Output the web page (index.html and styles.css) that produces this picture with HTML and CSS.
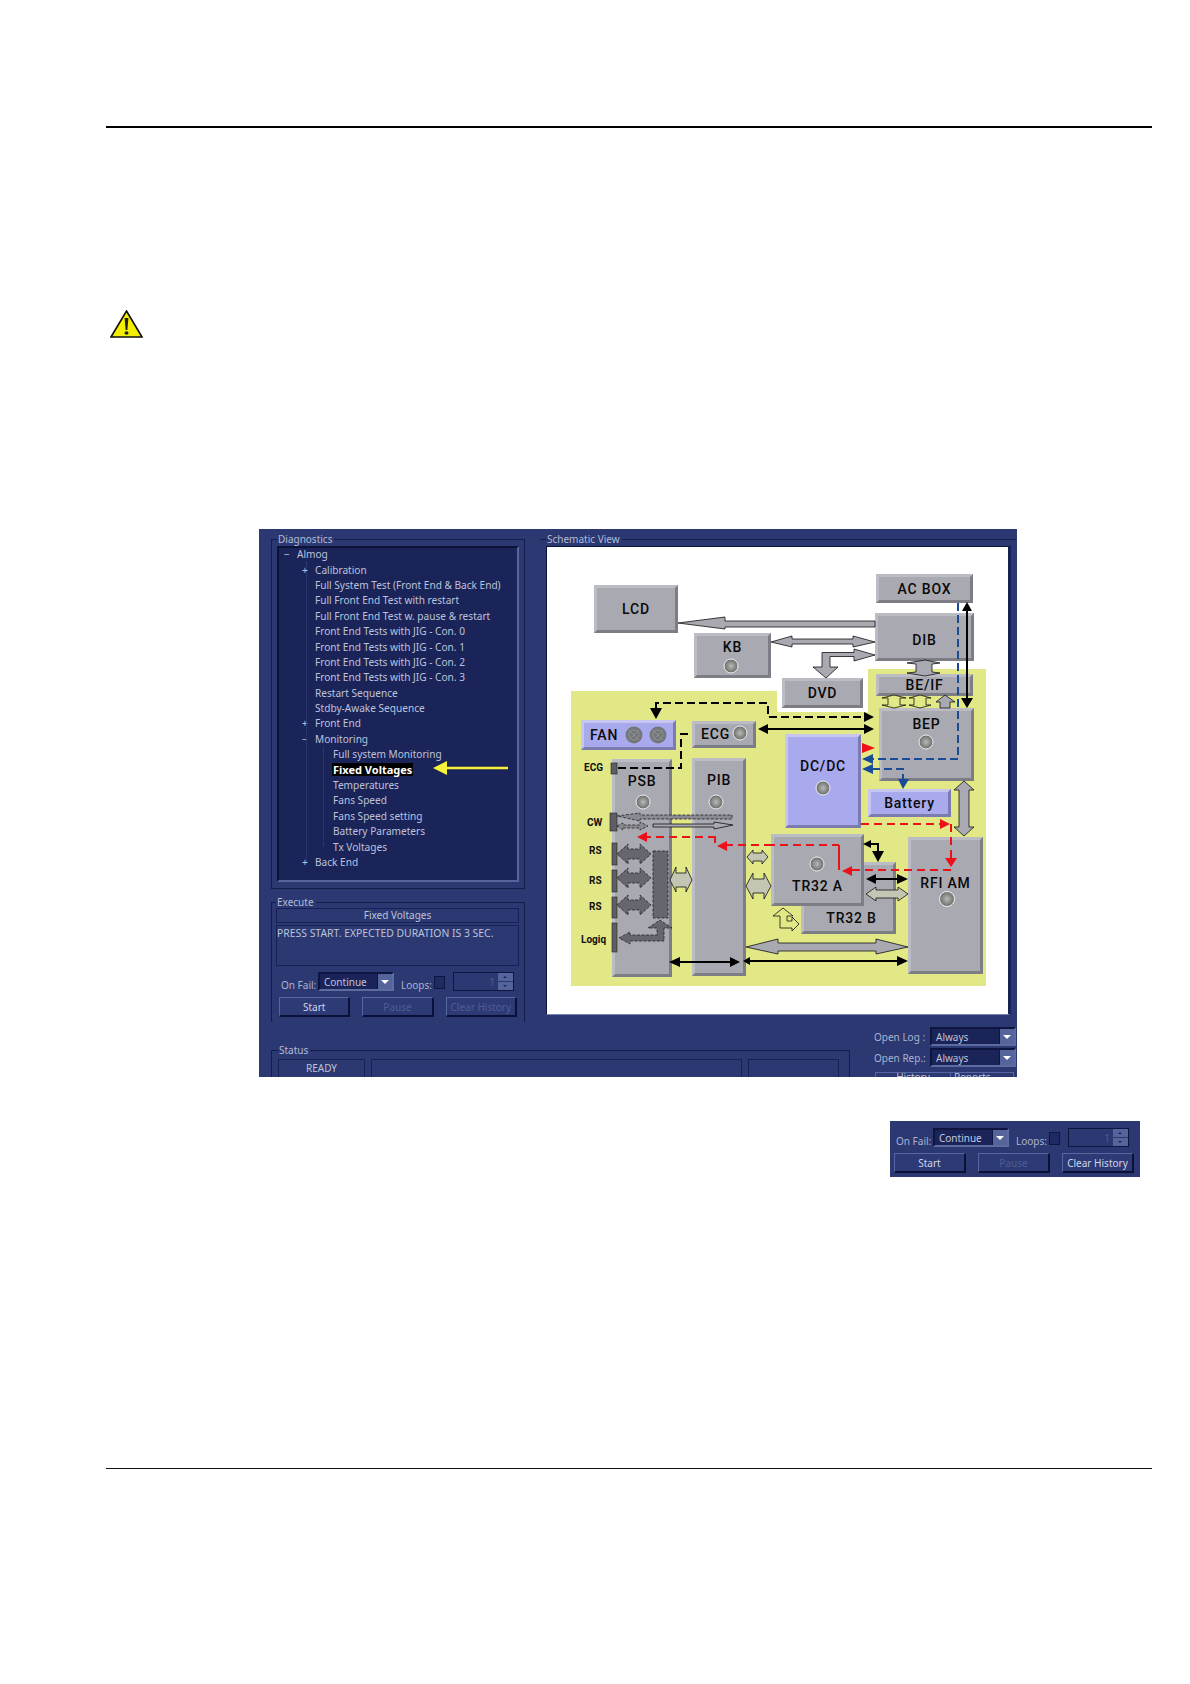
FILE: index.html
```html
<!DOCTYPE html>
<html lang="en">
<head>
    <meta charset="UTF-8">
    <title>Diagnostics - Fixed Voltages</title>
    <link rel="stylesheet" href="styles.css">
</head>
<body>
<div class="page">
    <div class="top-rule"></div>

    <svg class="warning-icon" width="33" height="28" viewBox="0 0 33 28">
        <polygon points="16.5,1 32,27 1,27" fill="#f4ee00" stroke="#111" stroke-width="1.6" stroke-linejoin="miter"/>
        <path d="M14.6 8 L18.4 8 L17.4 20 L15.6 20 Z" fill="#222"/>
        <ellipse cx="16.5" cy="23" rx="2" ry="1.8" fill="#222"/>
    </svg>

    <div class="shot">
        <div class="shot-top">
            <div class="left-col">
                <fieldset class="group group-diag">
                    <legend>Diagnostics</legend>
                    <div class="tree">
                        <div class="row row-root"><span class="toggle">&minus;</span>Almog</div>
                        <ul class="tree-l2">
                            <li class="row row-l2"><span class="toggle">+</span>Calibration</li>
                            <li class="row row-l2"><span class="toggle"></span>Full System Test (Front End &amp; Back End)</li>
                            <li class="row row-l2"><span class="toggle"></span>Full Front End Test with restart</li>
                            <li class="row row-l2"><span class="toggle"></span>Full Front End Test w. pause &amp; restart</li>
                            <li class="row row-l2"><span class="toggle"></span>Front End Tests with JIG - Con. 0</li>
                            <li class="row row-l2"><span class="toggle"></span>Front End Tests with JIG - Con. 1</li>
                            <li class="row row-l2"><span class="toggle"></span>Front End Tests with JIG - Con. 2</li>
                            <li class="row row-l2"><span class="toggle"></span>Front End Tests with JIG - Con. 3</li>
                            <li class="row row-l2"><span class="toggle"></span>Restart Sequence</li>
                            <li class="row row-l2"><span class="toggle"></span>Stdby-Awake Sequence</li>
                            <li class="row row-l2"><span class="toggle">+</span>Front End</li>
                            <li class="row row-l2"><span class="toggle">&minus;</span>Monitoring</li>
                            <li>
                                <ul class="tree-l3">
                                    <li class="row row-l3">Full system Monitoring</li>
                                    <li class="row row-l3"><span class="selected">Fixed Voltages</span></li>
                                    <li class="row row-l3">Temperatures</li>
                                    <li class="row row-l3">Fans Speed</li>
                                    <li class="row row-l3">Fans Speed setting</li>
                                    <li class="row row-l3">Battery Parameters</li>
                                    <li class="row row-l3">Tx Voltages</li>
                                </ul>
                            </li>
                            <li class="row row-l2"><span class="toggle">+</span>Back End</li>
                        </ul>
                        <svg class="tree-arrow" width="76" height="16" viewBox="0 0 76 16">
                            <polygon points="0,8 14,1 14,6.8 75,6.8 75,9.2 14,9.2 14,15" fill="#f6f23a"/>
                        </svg>
                    </div>
                </fieldset>

                <fieldset class="group group-exec">
                    <legend>Execute</legend>
                    <div class="exec-title">Fixed Voltages</div>
                    <div class="exec-text">PRESS START. EXPECTED DURATION IS 3 SEC.</div>
                    <div class="run-panel">
                        <div class="run-row">
                            <span class="run-label">On Fail:</span>
                            <div class="select select-run"><span>Continue</span><span class="select-btn"></span></div>
                            <span class="loops-label">Loops:</span>
                            <span class="checkbox"></span>
                            <div class="spin"><span>1</span><span class="spin-btns"><i></i><i></i></span></div>
                        </div>
                        <div class="run-buttons">
                            <div class="btn">Start</div>
                            <div class="btn btn-off">Pause</div>
                            <div class="btn btn-off">Clear History</div>
                        </div>
                    </div>
                </fieldset>
            </div>

            <fieldset class="group group-schem">
                <legend>Schematic View</legend>
                <div class="schematic">
                    <div class="yellow-area"></div>

                    <div class="node node-lcd">LCD</div>
                    <div class="node node-ac">AC BOX</div>
                    <div class="node node-dib">DIB</div>
                    <div class="node node-kb">KB</div>
                    <div class="node node-dvd">DVD</div>
                    <div class="node node-beif">BE/IF</div>
                    <div class="node node-bep">BEP</div>
                    <div class="node node-ecg">ECG</div>
                    <div class="node node-psb">PSB</div>
                    <div class="node node-pib">PIB</div>
                    <div class="node node-blue node-fan">FAN</div>
                    <div class="node node-blue node-dc">DC/DC</div>
                    <div class="node node-blue node-batt">Battery</div>
                    <div class="node node-trb">TR32 B</div>
                    <div class="node node-tra">TR32 A</div>
                    <div class="node node-rfi">RFI AM</div>

                    <span class="conn-label label-ecg">ECG</span>
                    <span class="conn-label label-cw">CW</span>
                    <span class="conn-label label-rs1">RS</span>
                    <span class="conn-label label-rs2">RS</span>
                    <span class="conn-label label-rs3">RS</span>
                    <span class="conn-label label-logiq">Logiq</span>

                    <!-- coordinates are page pixels, so the viewBox starts at the panel corner -->
                    <svg class="wires" width="461" height="467" viewBox="547 547 461 467">
                        <defs>
                            <radialGradient id="led" cx="50%" cy="50%" r="55%">
                                <stop offset="0" stop-color="#b8bab8"/>
                                <stop offset="1" stop-color="#5f625f"/>
                            </radialGradient>
                        </defs>

                        <!-- grey buses -->
                        <g class="bus">
                            <polygon points="678,623 725,617 725,621 875,621 875,627 725,627 725,629"/>
                            <polygon points="771,642 792,636 792,639 853,639 853,636 875,642 853,647 853,644 792,644 792,647"/>
                            <polygon points="875,655 854,649 854,652.5 822,652.5 822,667 813,667 826,678 838,667 830,667 830,656.5 854,656.5 854,661"/>
                            <polygon points="925,660 940,663 932,664 932,672 940,673 925,676 907,673 916,672 916,664 907,663"/>
                            <polygon points="945,695 955,702 950,702 950,708 940,708 940,702 936,702"/>
                            <polygon points="964,781 974,790 969,790 969,827 974,827 964,836 954,827 959,827 959,790 954,790"/>
                            <polygon points="746,947 778,939 778,943 876,943 876,939 908,947 876,954 876,951 778,951 778,954"/>
                        </g>
                        <g class="bus-hollow">
                            <polygon points="894,695 906,698 900,698 900,705 906,705 894,708 882,705 888,705 888,698 882,698"/>
                            <polygon points="920,695 931,698 926,698 926,705 931,705 920,708 909,705 914,705 914,698 909,698"/>
                            <polygon points="783,908 793,916 787,916 787,921 792,921 792,917 799,924 792,931 792,928 780,928 780,916 773,916"/>
                        </g>
                        <g class="bus-light">
                            <polygon points="670,880 676,867 676,873 686,873 686,867 692,880 686,892 686,887 676,887 676,892"/>
                            <polygon points="747,857 753,850 753,853 762,853 762,850 768,857 762,864 762,861 753,861 753,864"/>
                            <polygon points="746,886 753,873 753,879 764,879 764,873 771,886 764,899 764,893 753,893 753,899"/>
                            <polygon points="866,894 876,887 876,890 898,890 898,887 908,894 898,901 898,898 876,898 876,901"/>
                        </g>

                        <!-- CW lines -->
                        <g class="thin-dash">
                            <polygon points="617,816 640,813 640,815 732,815 732,819 640,819 640,821"/>
                            <polygon points="617,826 623,823 623,825 640,825 640,822 648,826 640,830 640,828 623,828 623,830"/>
                        </g>
                        <polygon class="bus" points="653,824 714,824 714,822 733,825 714,829 714,827 653,827"/>

                        <!-- RS and logiq, dark on PSB -->
                        <g class="bus-dark">
                            <polygon points="617,854 628,844 628,849 640,849 640,844 651,854 640,864 640,859 628,859 628,864"/>
                            <polygon points="617,878 628,868 628,873 640,873 640,868 651,878 640,888 640,883 628,883 628,888"/>
                            <polygon points="617,905 628,895 628,900 640,900 640,895 651,905 640,915 640,910 628,910 628,915"/>
                            <rect x="653" y="851" width="15" height="67"/>
                            <polygon points="619,938 630,932 630,935 657,935 657,928 648,928 660,920 672,928 664,928 664,941 630,941 630,944"/>
                        </g>
                        <g class="conn">
                            <rect x="611" y="763" width="6" height="11"/>
                            <rect x="610" y="813" width="7" height="18"/>
                            <rect x="612" y="843" width="5" height="22"/>
                            <rect x="612" y="870" width="5" height="22"/>
                            <rect x="612" y="897" width="5" height="21"/>
                            <rect x="612" y="923" width="5" height="29"/>
                        </g>

                        <!-- black wires -->
                        <g class="wire-black">
                            <path d="M967 610 V700"/>
                            <path d="M766 729 H866"/>
                            <path d="M678 962 H732"/>
                            <path d="M750 961 H900"/>
                            <path d="M870 844 H878 V854"/>
                            <path d="M874 879 H900"/>
                        </g>
                        <g class="wire-dash">
                            <path d="M656 708 V703 H768 V717 H866"/>
                            <path d="M688 734 H681 V768 H618"/>
                        </g>
                        <g class="head-black">
                            <polygon points="967,602 962,611 972,611"/>
                            <polygon points="967,708 961,698 973,698"/>
                            <polygon points="758,729 768,724 768,734"/>
                            <polygon points="874,729 864,724 864,734"/>
                            <polygon points="874,717 864,712 864,722"/>
                            <polygon points="656,719 650,708 662,708"/>
                            <polygon points="669,962 680,957 680,967"/>
                            <polygon points="740,962 730,957 730,967"/>
                            <polygon points="743,961 750,957 750,965"/>
                            <polygon points="908,961 897,956 897,966"/>
                            <polygon points="863,844 871,840 871,848"/>
                            <polygon points="878,862 872,851 884,851"/>
                            <polygon points="866,879 876,874 876,884"/>
                            <polygon points="908,879 897,874 897,884"/>
                        </g>

                        <!-- blue dashed -->
                        <g class="wire-blue">
                            <path d="M958 603 V759 H872"/>
                            <path d="M872 769 H903 V780"/>
                        </g>
                        <g class="head-blue">
                            <polygon points="862,759 873,754 873,764"/>
                            <polygon points="862,769 873,764 873,774"/>
                            <polygon points="903,789 898,779 909,779"/>
                        </g>

                        <!-- red dashed -->
                        <g class="wire-red">
                            <path d="M861 824 H940"/>
                            <path d="M951 824 V858"/>
                            <path d="M951 870 H850"/>
                            <path d="M767 845 H839"/>
                            <path d="M725 845 H767"/>
                            <path d="M716 837 H645"/>
                        </g>
                        <path class="wire-red-solid" d="M839 845 V870"/>
                        <path class="wire-red-solid" d="M715 837 V843"/>
                        <g class="head-red">
                            <polygon points="875,748 862,743 862,753"/>
                            <polygon points="950,824 940,819 940,829"/>
                            <polygon points="951,867 945,858 957,858"/>
                            <polygon points="842,871 852,866 852,876"/>
                            <polygon points="717,846 727,841 727,851"/>
                            <polygon points="637,837 647,832 647,842"/>
                        </g>

                        <!-- leds -->
                        <g class="led">
                            <circle cx="731" cy="666" r="7"/>
                            <circle cx="926" cy="742" r="7"/>
                            <circle cx="740" cy="733" r="7"/>
                            <circle cx="643" cy="802" r="7"/>
                            <circle cx="716" cy="802" r="7"/>
                            <circle cx="823" cy="788" r="7"/>
                            <circle cx="817" cy="864" r="7"/>
                            <circle cx="947" cy="899" r="7.5"/>
                        </g>
                        <g class="fan-blade">
                            <circle cx="634" cy="735" r="8.5"/>
                            <circle cx="658" cy="735" r="8.5"/>
                            <circle class="fan-ring" cx="634" cy="735" r="5"/>
                            <circle class="fan-ring" cx="658" cy="735" r="5"/>
                            <path d="M629 730 L639 740 M639 730 L629 740 M653 730 L663 740 M663 730 L653 740"/>
                        </g>
                    </svg>
                </div>
            </fieldset>
        </div>

        <div class="shot-bottom">
            <fieldset class="group group-status">
                <legend>Status</legend>
                <div class="status-row">
                    <div class="status-box status-ready">READY</div>
                    <div class="status-box status-main"></div>
                    <div class="status-box status-end"></div>
                </div>
            </fieldset>
            <div class="open-col">
                <div class="open-row">
                    <span class="open-label">Open Log :</span>
                    <div class="select select-open"><span>Always</span><span class="select-btn"></span></div>
                </div>
                <div class="open-row">
                    <span class="open-label">Open Rep.:</span>
                    <div class="select select-open"><span>Always</span><span class="select-btn"></span></div>
                </div>
                <div class="history-btn"><span class="history-a">History</span><span class="history-b">Reports</span></div>
            </div>
        </div>
    </div>

    <div class="run-panel crop-panel">
        <div class="run-row">
            <span class="run-label">On Fail:</span>
            <div class="select select-run"><span>Continue</span><span class="select-btn"></span></div>
            <span class="loops-label">Loops:</span>
            <span class="checkbox"></span>
            <div class="spin"><span>1</span><span class="spin-btns"><i></i><i></i></span></div>
        </div>
        <div class="run-buttons">
            <div class="btn">Start</div>
            <div class="btn btn-off">Pause</div>
            <div class="btn">Clear History</div>
        </div>
    </div>

    <div class="bottom-rule"></div>
</div>
</body>
</html>
```

FILE: styles.css
```css
body {
    margin: 0;
    background: #fff;
    font-family: "Noto Sans", "Open Sans", sans-serif;
}

.page {
    padding: 0 38px 0 106px;
}

.top-rule {
    margin-top: 126px;
    height: 2px;
    background: #000;
}

.bottom-rule {
    margin-top: 291px;
    height: 1px;
    background: #111;
}

.warning-icon {
    display: block;
    margin: 182px 0 0 4px;
}

/* the screenshot */
.shot {
    box-sizing: border-box;
    width: 758px;
    height: 548px;
    margin: 191px 0 0 153px;
    padding: 3px 0 0 12px;
    overflow: hidden;
    background: #2b3871;
    color: #bcc3db;
    font-size: 10px;
}

.shot-top {
    display: flex;
    gap: 15px;
    height: 490px;
}

.left-col {
    display: flex;
    flex-direction: column;
    gap: 6px;
    width: 254px;
}

.group {
    box-sizing: border-box;
    min-width: 0;
    margin: 0;
    border: 1px solid #141c4c;
}

.group legend {
    margin-left: 0;
    padding: 0 2px 0 1px;
    line-height: 14px;
    color: #b4bbd6;
}

.group-diag {
    height: 357px;
    padding: 0 5px 0 5px;
}

.group-exec {
    height: 127px;
    padding: 0 5px 0 4px;
    border-bottom: none;
}

.group-schem {
    width: 476px;
    height: 490px;
    padding: 0 3px 0 6px;
    border-bottom: none;
    border-left: none;
    border-right: none;
}

/* tree */
.tree {
    position: relative;
    box-sizing: border-box;
    height: 336px;
    border: 2px solid #0c1238;
    border-right-color: #56659b;
    border-bottom-color: #56659b;
    background: #1b2459;
    font-size: 10.1px;
}

.tree ul {
    position: relative;
    margin: 0;
    padding: 0;
    list-style: none;
}

.tree-l2::before,
.tree-l3::before {
    content: "";
    position: absolute;
    top: 0;
    bottom: 8px;
    border-left: 1px dotted #3a4680;
}

.tree-l2::before {
    left: 27px;
}

.tree-l3::before {
    left: 44px;
}

.row {
    display: flex;
    align-items: center;
    height: 15.4px;
    white-space: nowrap;
}

.row-root {
    margin-top: -1.5px;
    padding-left: 3px;
}

.row-l2 {
    padding-left: 21px;
}

.row-l3 {
    padding-left: 54px;
}

.toggle {
    width: 15px;
    flex: none;
    padding-left: 2px;
    box-sizing: border-box;
}

.selected {
    margin-left: -1px;
    padding: 0 1px;
    background: #000;
    color: #fff;
    font-size: 11px;
    font-weight: 700;
    line-height: 13px;
}

.tree-arrow {
    position: absolute;
    left: 154px;
    top: 212px;
}

/* execute */
.exec-title {
    height: 15px;
    margin-top: -1px;
    border: 1px solid #18205a;
    box-sizing: border-box;
    line-height: 13px;
    text-align: center;
    font-size: 10px;
}

.exec-text {
    box-sizing: border-box;
    height: 41px;
    margin-top: 2px;
    border: 1px solid #18205a;
    line-height: 15px;
    font-size: 10.4px;
    white-space: nowrap;
}

.run-panel {
    margin-top: 6px;
    padding: 0 2px 0 3px;
}

.run-row {
    display: flex;
    align-items: center;
    height: 19px;
    padding-left: 2px;
}

.run-label {
    width: 37px;
    flex: none;
    padding-top: 6px;
    color: #aab2d0;
}

.loops-label {
    width: 33px;
    flex: none;
    margin-left: 7px;
    padding-top: 6px;
    color: #aab2d0;
}

.select {
    display: flex;
    align-items: center;
    justify-content: space-between;
    box-sizing: border-box;
    height: 19px;
    padding-left: 4px;
    border: 2px solid #0e1540;
    border-right-color: #5d6ca0;
    border-bottom-color: #5d6ca0;
    background: #1b2459;
}

.select-run {
    width: 76px;
    flex: none;
}

.select-btn {
    position: relative;
    width: 14px;
    height: 15px;
    border-left: 1px solid #0e1540;
    background: #55659c;
}

.select-btn::after {
    content: "";
    position: absolute;
    left: 3px;
    top: 6px;
    border: 4px solid transparent;
    border-top: 4px solid #fff;
    border-bottom: none;
}

.checkbox {
    box-sizing: border-box;
    width: 11px;
    height: 13px;
    flex: none;
    margin-top: 2px;
    border: 1px solid #0e1540;
    background: #1f2a63;
}

.spin {
    display: flex;
    align-items: center;
    justify-content: flex-end;
    gap: 3px;
    box-sizing: border-box;
    width: 61px;
    height: 19px;
    flex: none;
    margin-left: 8px;
    border: 1px solid #0e1540;
    color: #4f5d92;
}

.spin-btns {
    display: flex;
    flex-direction: column;
    gap: 1px;
    width: 15px;
    height: 17px;
}

.spin-btns i {
    position: relative;
    flex: 1;
    background: #55659c;
}

.spin-btns i::after {
    content: "";
    position: absolute;
    left: 5px;
    top: 3px;
    border: 2px solid transparent;
    border-top: 2px solid #1b2459;
    border-bottom: none;
}

.spin-btns i:first-child::after {
    border-top: none;
    border-bottom: 2px solid #1b2459;
}

.run-buttons {
    display: grid;
    grid-template-columns: 1fr 1fr 1fr;
    gap: 12px;
    margin-top: 6px;
}

.btn {
    box-sizing: border-box;
    height: 20px;
    border: 1px solid #5666a0;
    border-right: 2px solid #0b1136;
    border-bottom: 2px solid #0b1136;
    background: #2d3a76;
    line-height: 18px;
    text-align: center;
    color: #d0d5e8;
    white-space: nowrap;
}

.btn-off {
    color: #4f5d92;
}

.crop-panel {
    box-sizing: border-box;
    width: 250px;
    height: 56px;
    margin: 44px 0 0 784px;
    padding: 7px 6px 5px 4px;
    background: #2b3871;
    color: #c3c9e0;
    font-size: 10px;
}

/* bottom strip */
.shot-bottom {
    display: flex;
    gap: 24px;
}

.group-status {
    width: 579px;
    height: 60px;
    margin-top: 21px;
    padding: 0 5px 0 6px;
}

.status-row {
    display: flex;
    gap: 6px;
    margin-top: 2px;
}

.status-box {
    box-sizing: border-box;
    height: 30px;
    border: 1px solid #18205a;
    line-height: 16px;
    text-align: center;
}

.status-ready {
    width: 87px;
}

.status-main {
    width: 371px;
}

.status-end {
    width: 91px;
}

.open-col {
    display: flex;
    flex-direction: column;
    gap: 2px;
    width: 142px;
    padding-top: 5px;
}

.open-row {
    display: flex;
    align-items: center;
}

.open-label {
    width: 56px;
    flex: none;
    color: #aab2d0;
}

.select-open {
    width: 86px;
}

.history-btn {
    display: flex;
    height: 20px;
    margin: 3px 2px 0 1px;
    border: 1px solid #5666a0;
    line-height: 9px;
}

.history-a {
    width: 74px;
    border-right: 1px solid #5666a0;
    text-align: center;
}

.history-b {
    padding-left: 3px;
}

/* schematic, a free canvas */
.schematic {
    position: relative;
    width: 461px;
    height: 467px;
    border-top: 1px solid #0c1238;
    border-left: 1px solid #0c1238;
    border-right: 3px solid #18205a;
    border-bottom: 1px solid #7a86b8;
    background: #fff;
    overflow: hidden;
}

.yellow-area {
    position: absolute;
    inset: 0;
    background: #e2e886;
    clip-path: polygon(24px 144px, 230px 144px, 230px 165px, 321px 165px, 321px 122px, 439px 122px, 439px 439px, 24px 439px);
}

.node {
    position: absolute;
    display: flex;
    align-items: center;
    justify-content: center;
    box-sizing: border-box;
    border: 3px solid;
    border-color: #bcbcc5 #7d7d85 #7d7d85 #bcbcc5;
    background: #a9a9b2;
    color: #0a0a0a;
    font-family: Roboto, "Liberation Sans", sans-serif;
    font-size: 14px;
    font-weight: 500;
    letter-spacing: 0.8px;
    line-height: 16px;
}

.node-blue {
    border-color: #c6c6f0 #7b7bb0 #7b7bb0 #c6c6f0;
    background: #a9a9ee;
}

.node-lcd { left: 47px; top: 38px; width: 84px; height: 48px; }
.node-ac { left: 329px; top: 27px; width: 97px; height: 29px; }
.node-dib { left: 328px; top: 66px; width: 99px; height: 48px; align-items: flex-start; padding-top: 16px; }
.node-kb { left: 147px; top: 86px; width: 77px; height: 45px; align-items: flex-start; padding-top: 3px; }
.node-dvd { left: 235px; top: 131px; width: 81px; height: 30px; }
.node-beif { left: 329px; top: 127px; width: 97px; height: 22px; }
.node-bep { left: 332px; top: 161px; width: 95px; height: 73px; align-items: flex-start; padding-top: 5px; }
.node-fan { left: 34px; top: 173px; width: 95px; height: 30px; justify-content: flex-start; padding-left: 6px; }
.node-ecg { left: 145px; top: 174px; width: 64px; height: 27px; justify-content: flex-start; padding: 0 0 2px 6px; }
.node-dc { left: 238px; top: 187px; width: 76px; height: 94px; align-items: flex-start; padding-top: 21px; }
.node-psb { left: 65px; top: 212px; width: 60px; height: 218px; align-items: flex-start; padding-top: 11px; }
.node-pib { left: 145px; top: 211px; width: 54px; height: 218px; align-items: flex-start; padding-top: 11px; }
.node-batt { left: 321px; top: 242px; width: 83px; height: 28px; }
.node-trb { left: 254px; top: 315px; width: 95px; height: 72px; align-items: flex-start; padding: 45px 0 0 6px; }
.node-tra { left: 224px; top: 287px; width: 93px; height: 72px; align-items: flex-start; padding-top: 41px; }
.node-rfi { left: 361px; top: 290px; width: 75px; height: 137px; align-items: flex-start; padding-top: 35px; }

.conn-label {
    position: absolute;
    color: #111;
    font-family: Roboto, "Liberation Sans", sans-serif;
    font-size: 10px;
    font-weight: 700;
    line-height: 12px;
}

.label-ecg { left: 37px; top: 215px; }
.label-cw { left: 40px; top: 270px; }
.label-rs1 { left: 42px; top: 298px; }
.label-rs2 { left: 42px; top: 328px; }
.label-rs3 { left: 42px; top: 354px; }
.label-logiq { left: 34px; top: 387px; }

.wires {
    position: absolute;
    left: 0;
    top: 0;
}

.bus polygon,
polygon.bus {
    fill: #a9a9b2;
    stroke: #111;
    stroke-width: 0.8;
}

.bus-hollow polygon {
    fill: #e2e886;
    stroke: #111;
    stroke-width: 0.8;
}

.bus-light polygon {
    fill: #c4c6b4;
    stroke: #111;
    stroke-width: 0.8;
}

.bus-dark polygon,
.bus-dark rect {
    fill: #666670;
    stroke: #222;
    stroke-width: 0.8;
    stroke-dasharray: 3 1.5;
}

.thin-dash polygon {
    fill: #8a8a92;
    stroke: #222;
    stroke-width: 0.8;
    stroke-dasharray: 3 1.5;
}

.conn rect {
    fill: #5e5e66;
    stroke: #222;
    stroke-width: 0.6;
}

.wire-black path {
    fill: none;
    stroke: #000;
    stroke-width: 2;
}

.wire-dash path {
    fill: none;
    stroke: #000;
    stroke-width: 2;
    stroke-dasharray: 8 4;
}

.wire-blue path {
    fill: none;
    stroke: #1b4a96;
    stroke-width: 2;
    stroke-dasharray: 8 4;
}

.wire-red path {
    fill: none;
    stroke: #e8141a;
    stroke-width: 2;
    stroke-dasharray: 8 5;
}

.wire-red-solid {
    fill: none;
    stroke: #e8141a;
    stroke-width: 2;
}

.head-black polygon {
    fill: #000;
}

.head-blue polygon {
    fill: #1b4a96;
}

.head-red polygon {
    fill: #ee1018;
}

.led circle {
    fill: url(#led);
    stroke: #eef0f0;
    stroke-width: 1;
}

.fan-blade circle {
    fill: #74777a;
}

.fan-blade .fan-ring {
    fill: none;
    stroke: #8f9295;
    stroke-width: 1;
}

.fan-blade path {
    fill: none;
    stroke: #8f9295;
    stroke-width: 1;
}
```
